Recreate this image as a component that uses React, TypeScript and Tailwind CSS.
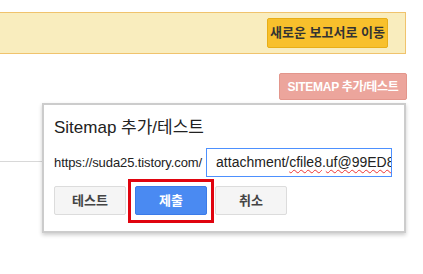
import React from "react";

const ko = { fontFamily: '"Liberation Sans", "Noto Sans CJK KR", Arial, sans-serif' };

export default function App() {
  return (
    <div className="relative w-[423px] h-[274px] bg-white overflow-hidden" style={ko}>
      <div className="pt-[12px]">
        <div className="w-[406px] h-[42px] bg-[#f9edbe] border-y border-r border-[#f0c36d] flex justify-end items-start pt-[5px] pr-[17px]">
          <button className="h-[30px] w-[121px] rounded-[2px] bg-[#f8c02c] border border-[#e8ae17] text-[13px] font-bold text-[#333] flex items-center justify-center">
            새로운 보고서로 이동
          </button>
        </div>
      </div>
      <div className="flex justify-end pr-[16px] pt-[19px]">
        <button className="h-[27px] w-[128px] rounded-[2px] bg-[#eca59c] border border-[#e3968c] text-[12px] font-bold text-white flex items-center justify-center tracking-[-0.3px]">
          SITEMAP 추가/테스트
        </button>
      </div>
      <div className="mt-[61px] w-[406px] h-px bg-[#d8d8d8]" />

      <div className="absolute left-[42px] top-[103px] w-[364px] h-[130px] bg-white border-2 border-[#cccccc] shadow-[0_2px_4px_rgba(0,0,0,0.2)] pl-[10px] pr-[10px] pt-[13px]">
        <div className="text-[17px] leading-[20px] text-[#222]">Sitemap 추가/테스트</div>
        <div className="flex items-center mt-[10px]">
          <span className="text-[13px] text-[#222] tracking-[-0.1px]">https://suda25.tistory.com/</span>
          <div className="ml-[4px] w-[186px] h-[29px] border border-[#4d90fe] flex items-center pl-[9px] overflow-hidden whitespace-nowrap text-[14px] text-[#222]">
            attachment/
            <span className="underline decoration-wavy decoration-[#e33] decoration-1 underline-offset-2">cfile8</span>.
            <span className="underline decoration-wavy decoration-[#e33] decoration-1 underline-offset-2">uf@99ED8</span>
          </div>
        </div>
        <div className="flex items-center mt-[9px] gap-[8px]">
          <button className="w-[72px] h-[29px] rounded-[2px] bg-[#f5f5f5] border border-[#dcdcdc] text-[13px] font-bold text-[#444]">
            테스트
          </button>
          <div className="relative ml-[1px]">
            <button className="w-[72px] h-[29px] rounded-[2px] bg-[#4a8af2] border border-[#3b7be8] text-[13px] font-bold text-white">
              제출
            </button>
            <span className="absolute -left-[7px] -top-[7px] -right-[7px] -bottom-[8px] border-[3px] border-[#e0040f]" />
          </div>
          <button className="w-[72px] h-[29px] rounded-[2px] bg-[#f5f5f5] border border-[#dcdcdc] text-[13px] font-bold text-[#444]">
            취소
          </button>
        </div>
      </div>
    </div>
  );
}
